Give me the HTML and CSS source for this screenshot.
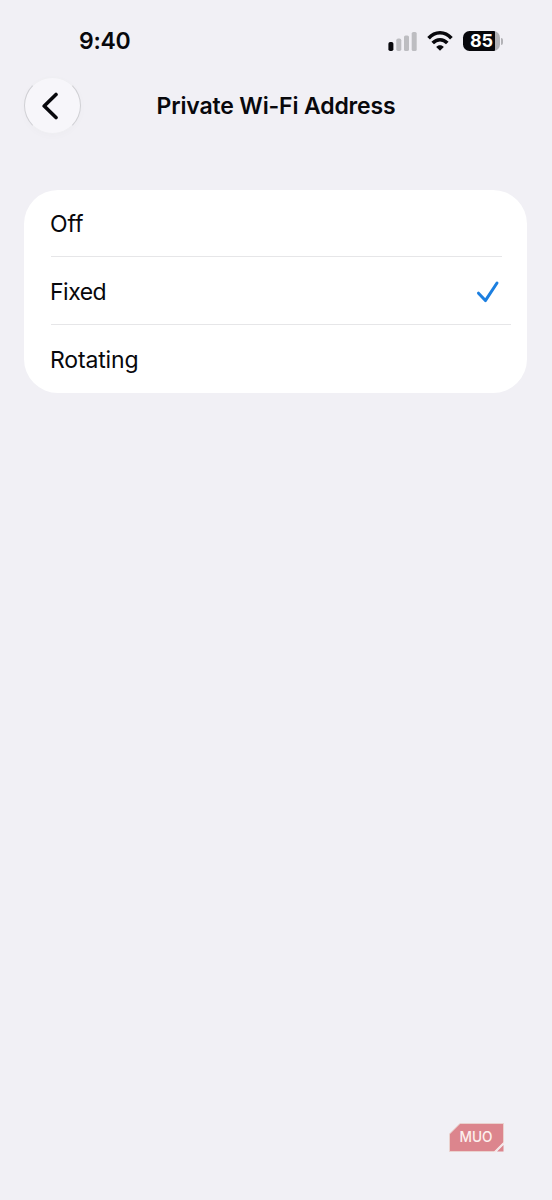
FILE: index.html
```html
<!DOCTYPE html>
<html lang="en">
<head>
<meta charset="utf-8">
<title>Private Wi-Fi Address</title>
<link rel="stylesheet" href="styles.css">
</head>
<body>
<div class="screen">
  <header class="status">
    <span class="time">9:40</span>
    <div class="indicators">
      <svg class="signal" width="30" height="22" viewBox="0 0 30 22">
        <rect x="0.4" y="12" width="5" height="9" rx="1.8" fill="#08080c"/>
        <rect x="8.3" y="8.5" width="5" height="12.5" rx="1.8" fill="#bdbdc1"/>
        <rect x="16" y="5.5" width="5" height="15.5" rx="1.6" fill="#bdbdc1"/>
        <rect x="23.7" y="2" width="5" height="19" rx="1.6" fill="#bdbdc1"/>
      </svg>
      <svg class="wifi" width="26" height="22" viewBox="0 0 26 22" fill="none" stroke="#08080c" stroke-width="3.6">
        <path d="M1.6 8.2C8 1 18 1 24.4 8.2"/>
        <path d="M5.7 13C10 8.6 16 8.6 20.3 13"/>
        <path d="M13 20.8L9.2 17C11.1 14.6 14.9 14.6 16.8 17Z" fill="#08080c" stroke="none"/>
      </svg>
      <div class="battery">
        <span class="level">85</span>
        <span class="cap"></span>
      </div>
    </div>
  </header>
  <nav class="navbar">
    <button class="back" aria-label="Back">
      <svg width="18" height="28" viewBox="0 0 18 28" fill="none" stroke="#08080c" stroke-width="3.6" stroke-linecap="round" stroke-linejoin="round"><path d="M15 2.5L3.2 14L15 25.5"/></svg>
    </button>
    <h1 class="title">Private Wi-Fi Address</h1>
  </nav>
  <main class="card">
    <div class="row"><span class="label">Off</span></div>
    <div class="row ruled"><span class="label tight">Fixed</span>
      <svg class="check" width="24" height="24" viewBox="0 0 24 24" fill="none" stroke="#1c7fe0" stroke-width="3" stroke-linecap="round" stroke-linejoin="round"><path d="M2.5 13.2L9.4 20.6L21 3"/></svg>
    </div>
    <div class="row ruled wide"><span class="label">Rotating</span></div>
  </main>
  <footer class="brand">
    <svg width="56" height="30" viewBox="0 0 56 30">
      <path d="M11 0.5H54.5V20L46 28.5H0.5V11Z" fill="#dc858d" stroke="#ead2ce" stroke-width="1"/>
      <path d="M54.5 22V28.5H48Z" fill="#dc858d"/>
      <path d="M45.5 29L55 19.5" stroke="#f6e6e6" stroke-width="1.4"/>
      <text class="mark" x="10.5" y="18.5" textLength="33" lengthAdjust="spacingAndGlyphs">MUO</text>
    </svg>
  </footer>
</div>
</body>
</html>
```
FILE: styles.css
```css
* { box-sizing: border-box; }
body {
  margin: 0;
  background: #f1f0f5;
  color: #08080c;
  font-family: Inter, "Liberation Sans", sans-serif;
}
.screen {
  height: 1200px;
  display: flex;
  flex-direction: column;
}
.status {
  height: 77px;
  padding: 26px 49px 0 79px;
  display: flex;
  justify-content: space-between;
  align-items: flex-start;
}
.time {
  font-size: 23px;
  line-height: 30px;
  font-weight: 560;
  letter-spacing: -0.3px;
}
.indicators {
  display: flex;
  align-items: center;
  height: 30px;
}
.signal { margin-right: 9px; }
.wifi { margin-right: 10px; }
.battery { display: flex; align-items: center; gap: 1px; }
.level {
  width: 37px;
  height: 20px;
  border-radius: 6.5px;
  background: linear-gradient(to right, #08080c 32px, #b2b2b6 32px);
  color: #fff;
  font-size: 18px;
  line-height: 20px;
  font-weight: 700;
  text-align: center;
  letter-spacing: -0.2px;
}
.cap {
  width: 2px;
  height: 7px;
  border-radius: 0 2px 2px 0;
  background: #b2b2b6;
}
.navbar {
  height: 57px;
  padding: 0 24px;
  display: grid;
  grid-template-columns: 57px 1fr 57px;
  align-items: center;
}
.back {
  width: 57px;
  height: 57px;
  padding: 0 5px 0 0;
  display: flex;
  align-items: center;
  justify-content: center;
  border: 1px solid;
  border-color: #efeff2 #d0d0d4;
  border-radius: 50%;
  background: #f7f6fa;
  box-shadow: 0 2px 8px rgba(0, 0, 0, 0.02);
}
.title {
  margin: 0;
  font-size: 23px;
  line-height: 30px;
  font-weight: 560;
  text-align: center;
  letter-spacing: -0.15px;
  white-space: nowrap;
}
.card {
  width: 503px;
  height: 203px;
  margin: 56px 0 0 24px;
  padding-left: 27px;
  border-radius: 34px;
  background: #fff;
}
.row {
  width: 451px;
  height: 66px;
  padding-top: 2px;
  display: flex;
  align-items: center;
  justify-content: space-between;
  font-size: 23px;
  line-height: 30px;
}
.ruled { height: 68px; border-top: 1px solid #e6e6e8; }
.wide { width: 460px; }
.label { margin-left: -1px; letter-spacing: -0.15px; }
.tight { letter-spacing: -0.5px; }
.check { margin-right: 2px; }
.brand {
  margin: auto 47px 47px auto;
  height: 30px;
}
.mark {
  font-family: Inter, sans-serif;
  font-size: 14px;
  font-weight: 500;
  fill: #fdf0ee;
}
```
